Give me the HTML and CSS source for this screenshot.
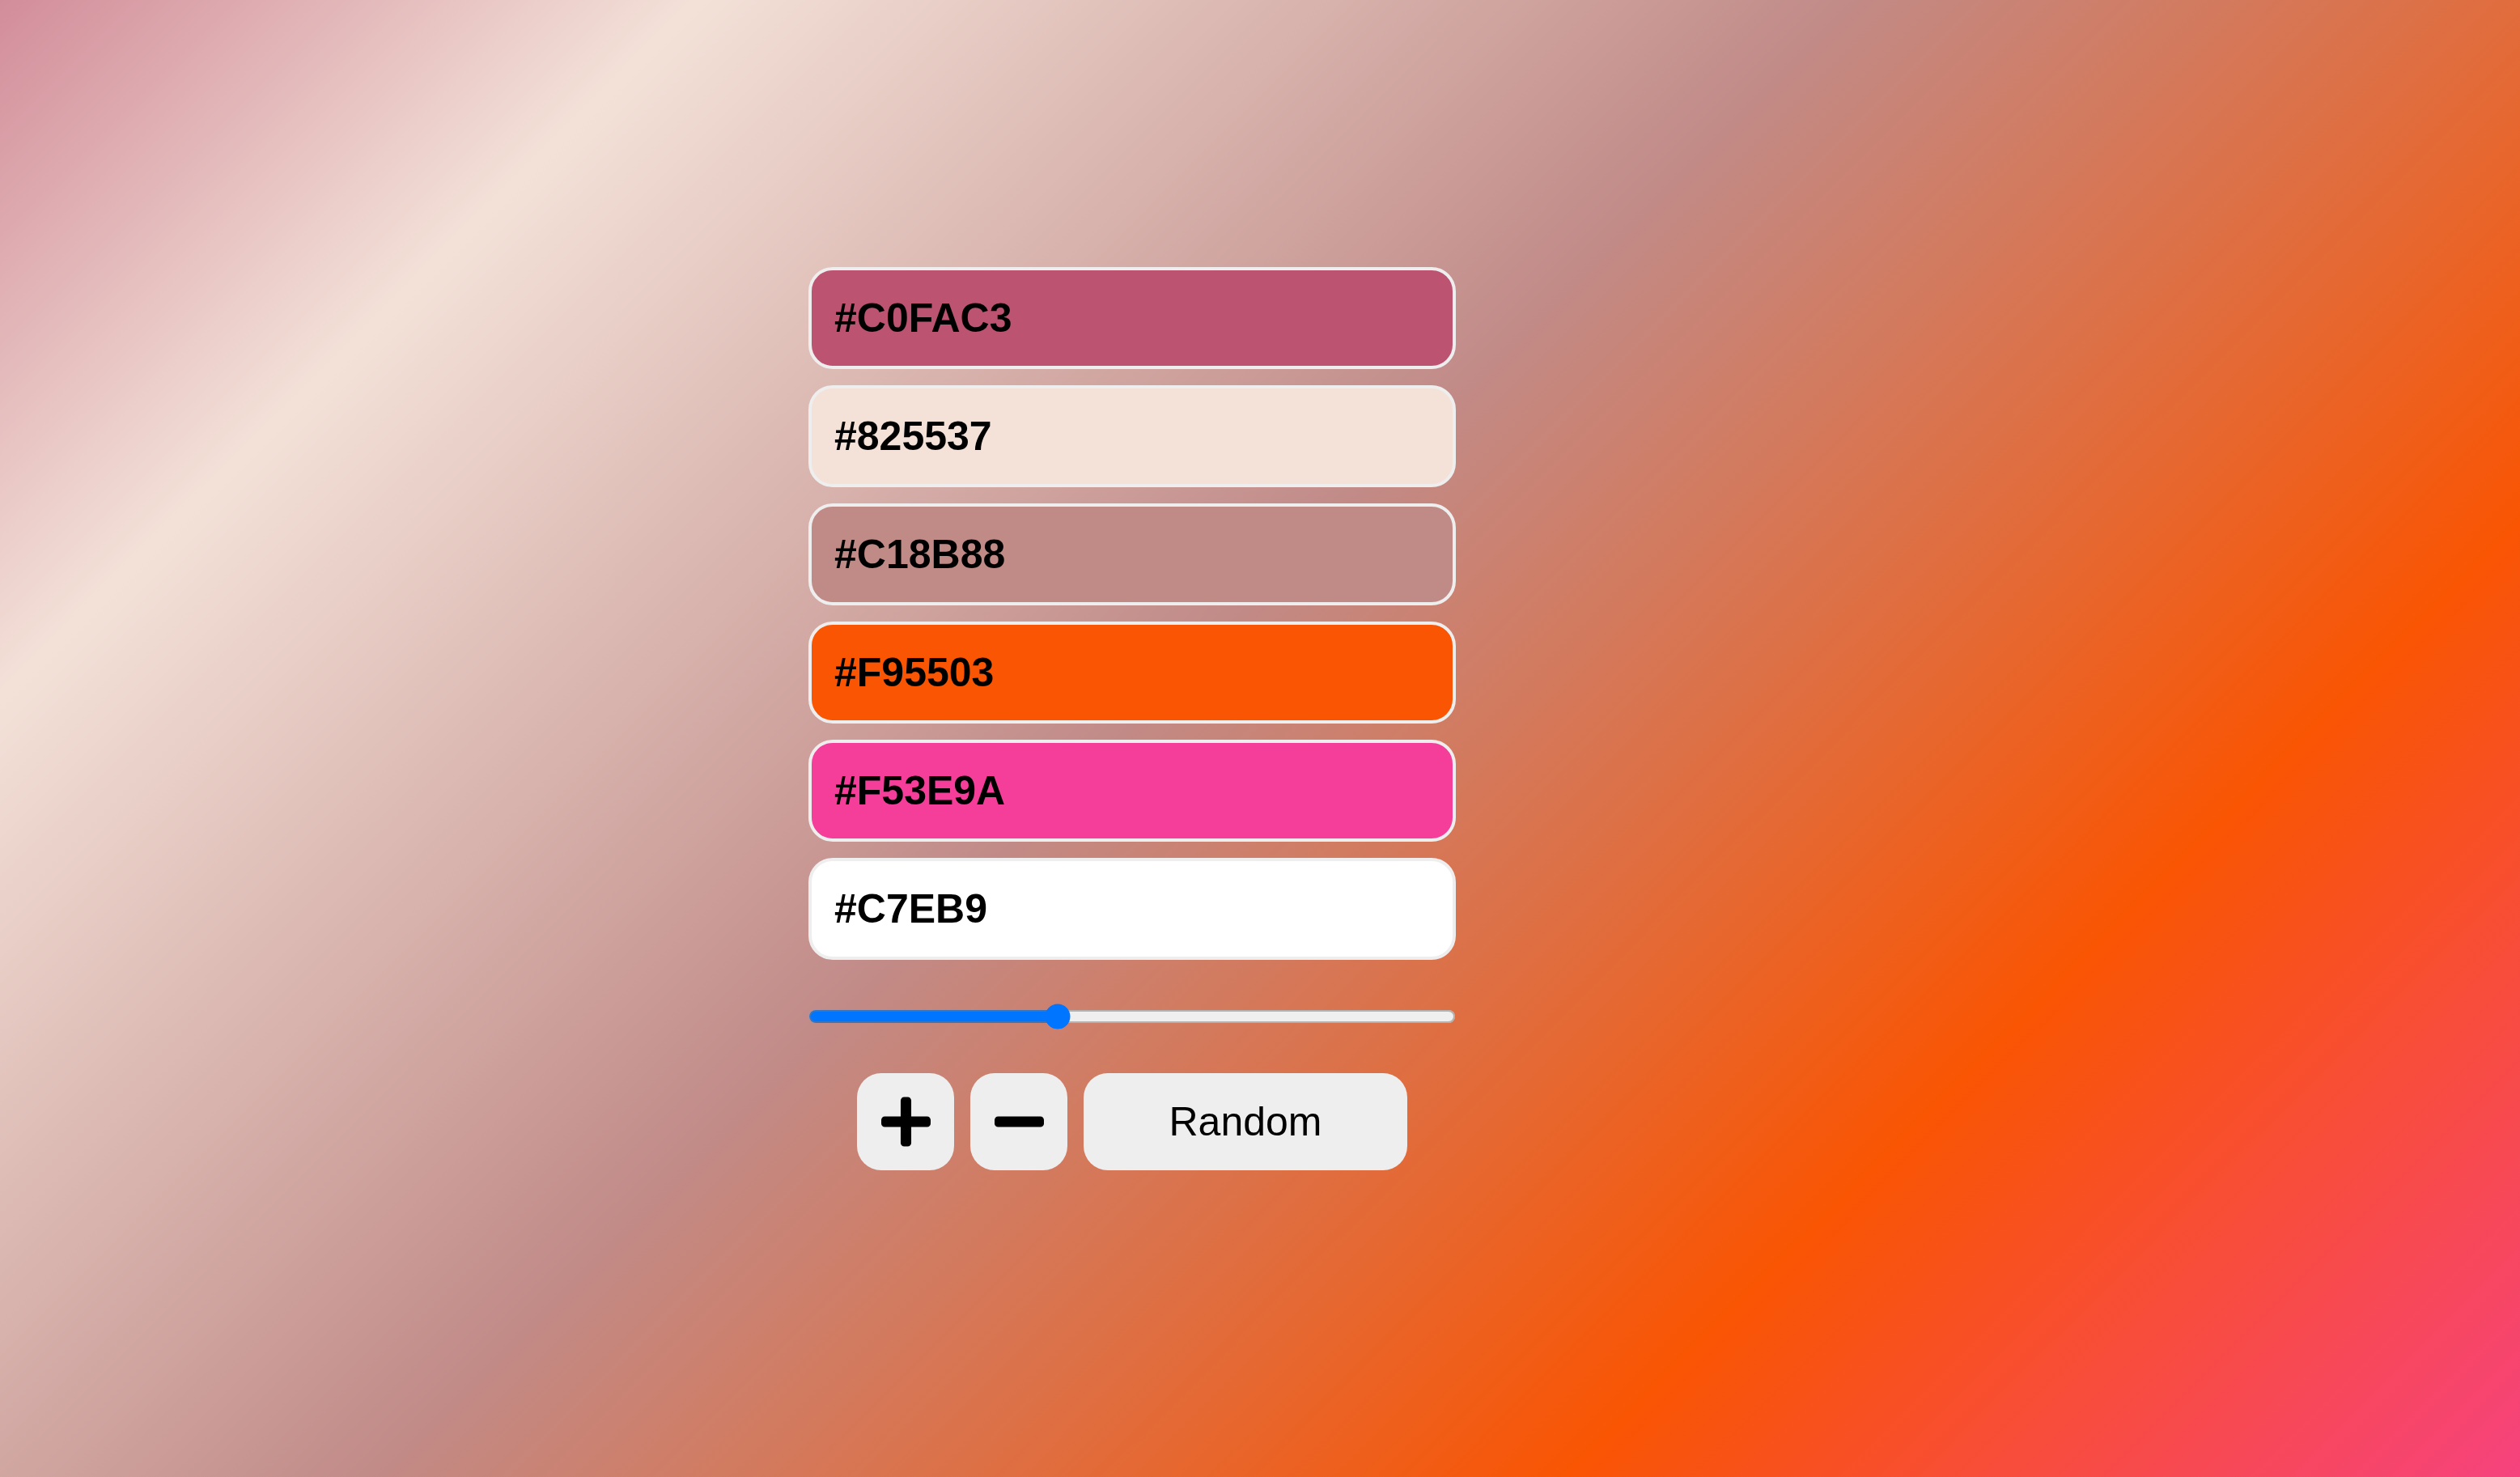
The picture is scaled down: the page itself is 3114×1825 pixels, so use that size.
FILE: index.html
```html
<!DOCTYPE html>
<html lang="en">
<head>
<meta charset="utf-8">
<title>Palette</title>
<link rel="stylesheet" href="styles.css">
</head>
<body>
<div class="app">
  <div class="palette">
    <div class="swatch swatch-1"><span class="hex">#C0FAC3</span></div>
    <div class="swatch swatch-2"><span class="hex">#825537</span></div>
    <div class="swatch swatch-3"><span class="hex">#C18B88</span></div>
    <div class="swatch swatch-4"><span class="hex">#F95503</span></div>
    <div class="swatch swatch-5"><span class="hex">#F53E9A</span></div>
    <div class="swatch swatch-6"><span class="hex">#C7EB9</span></div>
  </div>
  <div class="slider-row">
    <input class="count" type="range" min="0" max="100" value="38">
  </div>
  <div class="controls">
    <button class="btn btn-icon" aria-label="Add">
      <svg class="icon" viewBox="0 0 448 512"><path d="M416 208H272V64c0-17.670-14.330-32-32-32h-32c-17.670 0-32 14.330-32 32v144H32c-17.670 0-32 14.330-32 32v32c0 17.670 14.330 32 32 32h144v144c0 17.670 14.330 32 32 32h32c17.670 0 32-14.330 32-32V304h144c17.670 0 32-14.330 32-32v-32c0-17.670-14.330-32-32-32z"/></svg>
    </button>
    <button class="btn btn-icon" aria-label="Remove">
      <svg class="icon" viewBox="0 0 448 512"><path d="M416 208H32c-17.670 0-32 14.330-32 32v32c0 17.670 14.330 32 32 32h384c17.670 0 32-14.330 32-32v-32c0-17.670-14.330-32-32-32z"/></svg>
    </button>
    <button class="btn btn-random">Random</button>
  </div>
</div>
</body>
</html>
```
FILE: styles.css
```css
html, body {
  margin: 0;
  height: 100%;
}

body {
  font-family: "Liberation Sans", Arial, sans-serif;
  background: linear-gradient(135deg, #bc5470 -11.9%, #f3e1d8 17.5%, #c18b88 46%, #f95503 76.1%, #f53e9a 105.4%);
  min-height: 100vh;
}

.app {
  width: 800px;
  margin: 0 0 0 999px;
  padding-top: 330px;
  display: flex;
  flex-direction: column;
}

.palette {
  display: flex;
  flex-direction: column;
  gap: 20px;
}

.swatch {
  height: 126px;
  box-sizing: border-box;
  border: 4px solid #eeeeee;
  border-radius: 30px;
  padding: 0 28px;
  display: flex;
  align-items: center;
  font-size: 50px;
  font-weight: bold;
  color: #000;
}

.swatch-1 { background: #bc5370; }
.swatch-2 { background: #f4e1d8; }
.swatch-3 { background: #c08b87; }
.swatch-4 { background: #f95503; }
.swatch-5 { background: #f53e9a; }
.swatch-6 { background: #ffffff; }

.slider-row {
  margin-top: 54px;
  display: flex;
}

.count {
  zoom: 2;
  width: 400px;
  margin: 0;
  display: block;
}

.controls {
  display: flex;
  justify-content: center;
  gap: 20px;
  margin-top: 54px;
}

.btn {
  height: 120px;
  border: none;
  border-radius: 30px;
  background: #eeeeee;
  color: #000;
  font-family: inherit;
  font-size: 50px;
  padding: 0;
  display: flex;
  align-items: center;
  justify-content: center;
}

.btn-icon {
  width: 120px;
}

.btn-random {
  width: 400px;
}

.icon {
  width: 61px;
  height: 70px;
  fill: #000;
}
```
